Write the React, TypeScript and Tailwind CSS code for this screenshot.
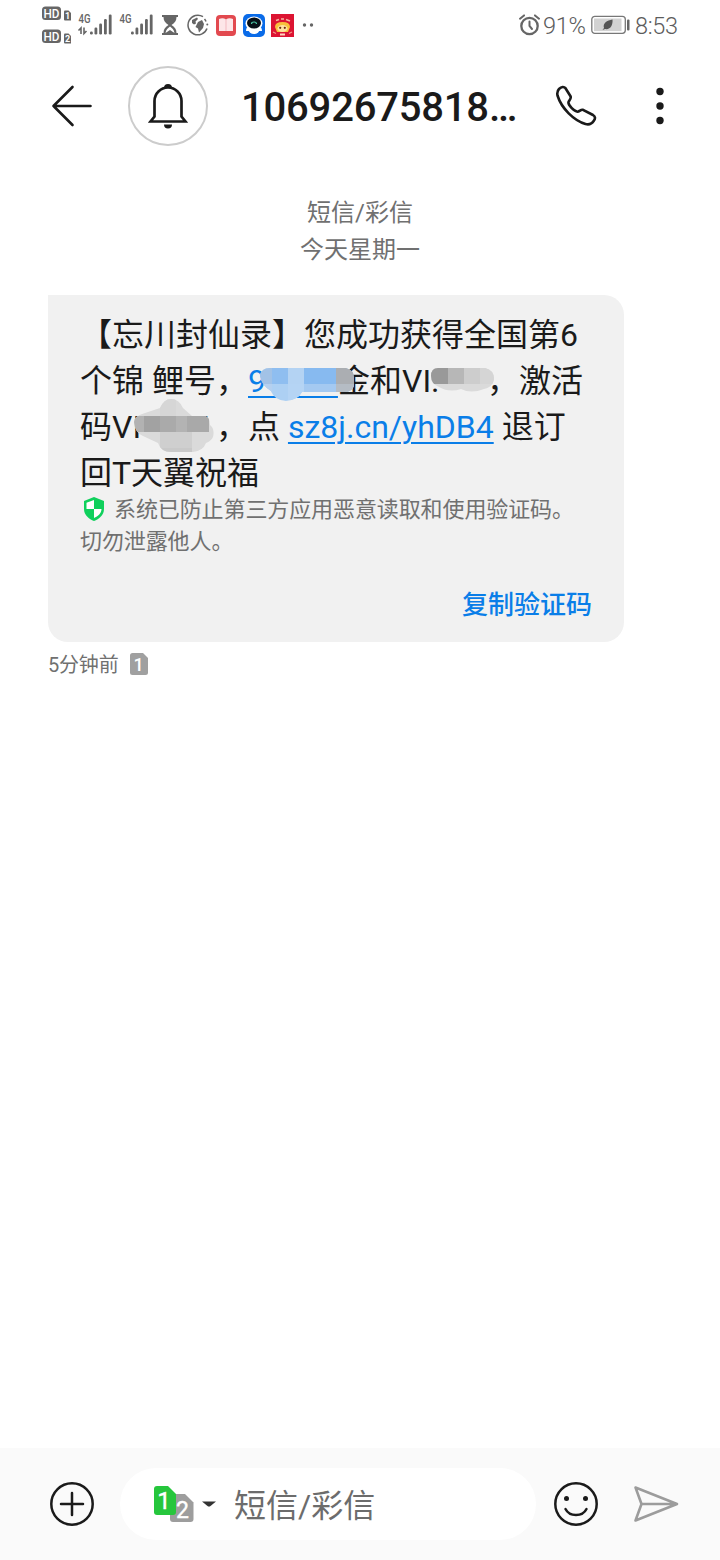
import React, { FC } from "react";

const INK = "#1a1a1a";
const STATUS = "#666666";

interface Tile {
  x: number;
  y: number;
  w: number;
  h: number;
  fill: string;
}

interface MosaicProps {
  id: string;
  className: string;
  width: number;
  height: number;
  shape: string;
  base: string;
  tiles: Tile[];
}

// Pixelated smudge that covers private parts of the message
const Mosaic: FC<MosaicProps> = ({ id, className, width, height, shape, base, tiles }) => (
  <svg className={className} width={width} height={height} viewBox={`0 0 ${width} ${height}`}>
    <clipPath id={id}>
      <path d={shape} />
    </clipPath>
    <g clipPath={`url(#${id})`}>
      <rect width={width} height={height} fill={base} />
      {tiles.map((t, i) => (
        <rect key={i} x={t.x} y={t.y} width={t.w} height={t.h} fill={t.fill} />
      ))}
    </g>
  </svg>
);

const amountTiles: Tile[] = [
  { x: 0, y: 2, w: 12, h: 16, fill: "#a2c2e6" },
  { x: 12, y: 2, w: 16, h: 16, fill: "#8fbef0" },
  { x: 28, y: 2, w: 16, h: 16, fill: "#b4d3f3" },
  { x: 44, y: 2, w: 32, h: 16, fill: "#87baf0" },
  { x: 76, y: 2, w: 18, h: 16, fill: "#abaeb2" },
  { x: 0, y: 18, w: 12, h: 16, fill: "#b5d0ef" },
  { x: 28, y: 18, w: 16, h: 16, fill: "#b5d4f4" },
  { x: 44, y: 18, w: 32, h: 16, fill: "#a4c9f1" },
  { x: 76, y: 18, w: 18, h: 16, fill: "#b5bcc4" },
];

const vipTiles: Tile[] = [
  { x: 0, y: 4, w: 17, h: 16, fill: "#999999" },
  { x: 17, y: 4, w: 16, h: 16, fill: "#b7b7b7" },
  { x: 33, y: 4, w: 16, h: 16, fill: "#cdcdcd" },
  { x: 49, y: 4, w: 14, h: 16, fill: "#d5d5d5" },
];

const codeTiles: Tile[] = [
  { x: 27, y: 0, w: 16, h: 17, fill: "#d6d6d6" },
  { x: 0, y: 17, w: 11, h: 16, fill: "#b2b2b2" },
  { x: 11, y: 17, w: 16, h: 16, fill: "#a2a2a2" },
  { x: 27, y: 17, w: 16, h: 16, fill: "#aaaaaa" },
  { x: 43, y: 17, w: 11, h: 16, fill: "#b3b3b3" },
  { x: 54, y: 17, w: 22, h: 16, fill: "#a9a9a9" },
  { x: 27, y: 33, w: 32, h: 16, fill: "#cfcfcf" },
  { x: 27, y: 49, w: 32, h: 4, fill: "#c9c9c9" },
];

const HdBadges = () => (
  <svg width="30" height="38" viewBox="0 0 30 38">
    {[1, 2].map((n, i) => (
      <g key={n} transform={`translate(0 ${i * 23})`}>
        <rect x="0" y="0.5" width="19" height="13.5" rx="3.5" fill={STATUS} />
        <text x="9.5" y="11.7" textAnchor="middle" fontSize="12.5" fontWeight="500" fill="#fff" textLength="16" lengthAdjust="spacingAndGlyphs">HD</text>
        <path d="M23 4.500h3.500l2.500 2.500V14.500H23q-1 0-1-1V5.500q0-1 1-1z" fill={STATUS} />
        <text x="25.5" y="13" textAnchor="middle" fontSize="9" fontWeight="700" fill="#fff">{n}</text>
      </g>
    ))}
  </svg>
);

const Signal: FC<{ arrows?: boolean }> = ({ arrows }) => (
  <svg className="overflow-visible" width="35" height="32" viewBox="0 -4 35 32">
    <text x="0.5" y="10" fontSize="13" fontWeight="500" fill={STATUS} textLength="12" lengthAdjust="spacingAndGlyphs">4G</text>
    {arrows && (
      <path d="M3 21v-6l-2.500 2.500M6 14.500v6l2.500-2.500" fill="none" stroke={STATUS} strokeWidth="1.600" />
    )}
    <g fill={STATUS}>
      <rect x="12" y="18.500" width="2.800" height="3" rx="1.200" />
      <rect x="16.500" y="14.500" width="2.800" height="7" rx="1.200" />
      <rect x="21.200" y="10.500" width="2.800" height="11" rx="1.200" />
      <rect x="26" y="6" width="2.800" height="15.500" rx="1.200" />
      <rect x="30.800" y="1.500" width="2.800" height="20" rx="1.200" />
    </g>
  </svg>
);

const StatusBar = () => (
  <div className="flex h-[50px] items-center pl-[42px] pr-[41px] text-[#5c5c5c]">
    <HdBadges />
    <div className="ml-1.5 flex gap-[6px]">
      <Signal arrows />
      <Signal />
    </div>
    <svg className="ml-[8px]" width="16" height="22" viewBox="0 0 16 22">
      <path d="M0 1h16v2h-1.500c0 4-2 6-5 8 3 2 5 4 5 8H16v2H0v-2h1.500c0-4 2-6 5-8-3-2-5-4-5-8H0z" fill={STATUS} />
      <path d="M3.500 19c.5-3.500 2.500-5 4.500-6.500 2 1.500 4 3 4.500 6.500l-4.500-3z" fill="#fff" />
    </svg>
    <svg className="ml-[9px]" width="22" height="22" viewBox="0 0 22 22">
      <path d="M16 2.700A9.800 9.800 0 1 0 20 14.500M17.500 5a9 9 0 0 1 1.500 2.500" fill="none" stroke={STATUS} strokeWidth="1.500" />
      <path d="M5 6l5-2.500 1 1.500-2.500 2.500 .5 2-2 1-2-1.500zM11 8l4-2 2 4-1 4-4 4.500-1-4-2.500-1.500z" fill={STATUS} />
      <circle cx="20.300" cy="10.500" r="1" fill={STATUS} />
    </svg>
    <svg className="ml-[7px]" width="20" height="21" viewBox="0 0 20 21">
      <rect width="20" height="21" rx="4" fill="#e2494f" />
      <path d="M3 4q4-1.500 7 .5 3-2 7-.5v12H3z" fill="#fde6e8" />
      <path d="M10 4.500V16" stroke="#f3b9c0" strokeWidth="1" />
    </svg>
    <svg className="ml-[7px]" width="22" height="23" viewBox="0 0 22 23">
      <rect width="22" height="23" rx="5" fill="#0a6be8" />
      <ellipse cx="11" cy="15.500" rx="5.500" ry="4.500" fill="#fff" />
      <path d="M3 17q0-4 3-5l1 5zM19 17q0-4-3-5l-1 5z" fill="#fff" />
      <ellipse cx="11" cy="9.500" rx="8.500" ry="7" fill="#fff" />
      <ellipse cx="11" cy="9" rx="7" ry="5.600" fill="#081018" />
      <path d="M8.500 10q0-2 2.500-2t2.500 2" fill="none" stroke="#4cc6a6" strokeWidth="1.200" />
    </svg>
    <svg className="ml-[6px]" width="23" height="23" viewBox="0 0 23 23">
      <rect width="23" height="23" fill="#dc1432" />
      <path d="M5 6.500l3-1M10 5h3M15 5.500l4 1.500" stroke="#f7b5a0" strokeWidth="1.600" />
      <path d="M4 13q0-5 7.500-5t7.500 5l-2 5H6z" fill="#f8c13c" />
      <ellipse cx="11.500" cy="14.500" rx="5" ry="3.500" fill="#ffe3a0" />
      <circle cx="9.200" cy="13.800" r="1.100" fill="#6b2a12" />
      <circle cx="13.800" cy="13.800" r="1.100" fill="#6b2a12" />
      <path d="M9 20.500h5" stroke="#ffd7c0" strokeWidth="2" />
      <path d="M2 18l3 1.500M21 18l-3 1.500" stroke="#f49a8a" strokeWidth="1.200" />
    </svg>
    <svg className="ml-[8px]" width="13" height="6" viewBox="0 0 13 6">
      <circle cx="2.500" cy="3" r="1.700" fill={STATUS} />
      <circle cx="9.500" cy="3" r="1.700" fill={STATUS} />
    </svg>
    <div className="ml-auto flex items-center">
      <svg width="22" height="22" viewBox="0 0 22 22" fill="none" stroke={STATUS} strokeLinecap="round">
        <circle cx="10.500" cy="12" r="8.200" strokeWidth="2.300" />
        <path d="M10.500 7.500v4.500l2.500 3" strokeWidth="2" />
        <path d="M1 4.700l4-3.300M20 4.700l-4-3.300" strokeWidth="2" />
      </svg>
      <span className="ml-[2px] w-[48px] pt-px text-[23.5px] font-light leading-[28px] tracking-[-0.3px]">91%</span>
      <svg width="39" height="20" viewBox="0 0 39 20">
        <rect x="0.800" y="1.300" width="33.500" height="17" rx="3" fill="#fff" stroke="#777" strokeWidth="1.300" />
        <rect x="3" y="3.500" width="27.500" height="12.600" fill="#d2d2d2" />
        <path d="M11.500 15l1.500-2c-1.500-5 3-7.500 8.500-8.500 .5 5.500-2 10.500-7.500 9.500z" fill="#555" />
        <rect x="36" y="4.500" width="2.500" height="11" rx="1" fill={STATUS} />
      </svg>
      <span className="ml-[5px] w-[44px] whitespace-nowrap pt-px text-[23.5px] font-light leading-[28px] tracking-[-0.3px]">8:53</span>
    </div>
  </div>
);

const Header = () => (
  <header className="flex h-[112px] items-center pl-[51px]">
    <svg width="42" height="42" viewBox="0 0 42 42" fill="none" stroke={INK} strokeWidth="2.600" strokeLinecap="round" strokeLinejoin="round">
      <path d="M21.500 2L2.500 21l19 19M2.500 21h37" />
    </svg>
    <div className="ml-[35px] flex h-20 w-20 items-center justify-center rounded-full border-2 border-[#cccccc]">
      <svg width="40" height="46" viewBox="0 0 40 46">
        <path d="M6.500 33.500V18a13.500 13.500 0 0 1 27 0v15.500l4 5H2.500z" fill="none" stroke={INK} strokeWidth="2.700" />
        <path d="M16 5a4 4 0 0 1 8 0zM16 41.500h8a4 4 0 0 1-8 0z" fill={INK} />
      </svg>
    </div>
    <h1 className="ml-[33px] w-[282px] whitespace-nowrap pt-[4px] text-[40px] font-medium leading-[48px] tracking-[-0.2px] text-[#1a1a1a]">
      10692675818…
    </h1>
    <svg className="ml-[32px]" width="42" height="42" viewBox="0 0 42 42" fill="none" stroke={INK} strokeWidth="2.600" strokeLinejoin="round">
      <path d="M4 4c2.500-2.500 5-2.600 6.500-.8l5 8c1.200 2.300-1.500 4-2 5.800-.7 3 5.800 9.500 9 9.700 2.200 0 3.300-2.700 5.500-1.900l10 5.200c2.300 1.400 2.500 3.500 1 5.500-2.200 3.500-5 4.500-8.500 3.500C19 35.500 6.500 23.500 2.500 10.500 2 8 2.300 5.800 4 4z" />
    </svg>
    <svg className="ml-[57px]" width="12" height="42" viewBox="0 0 12 42" fill={INK}>
      <circle cx="6" cy="6.500" r="3.700" />
      <circle cx="6" cy="21" r="3.700" />
      <circle cx="6" cy="35.500" r="3.700" />
    </svg>
  </header>
);

const Message = () => (
  <section className="ml-12 mt-[26px] h-[347px] w-[576px] rounded-[20px] rounded-tl-none bg-[#f1f1f1] px-8 pt-[17px]">
    <div className="relative whitespace-nowrap text-[32px] leading-[46px] text-[#1a1a1a]">
      <p>【忘川封仙录】您成功获得全国第6</p>
      <p className="flex">
        <span className="w-[168px]">个锦 鲤号，</span>
        <span className="w-[90px] text-[#0a7ee8] underline decoration-2 underline-offset-4">9<span className="text-transparent">0000</span></span>
        <span className="w-[149px]">金和VI.</span>
        <span>，激活</span>
      </p>
      <p className="flex">
        <span className="w-[98px]">码VI</span>
        <span className="w-[38px] pr-1 text-right">6</span>
        <span>，点&nbsp;</span>
        <span className="text-[#0a7ee8] underline decoration-2 underline-offset-4">sz8j.cn/yhDB4</span>
        <span>&nbsp;退订</span>
      </p>
      <p>回T天翼祝福</p>

      <Mosaic
        id="amount"
        className="absolute left-[180px] top-[54px]"
        width={94}
        height={38}
        shape="M0 10Q1 2 10 2H86Q94 4 94 12V20Q92 26 84 26H42Q38 34 26 35 14 34 11 25 2 20 0 10z"
        base="#add0f3"
        tiles={amountTiles}
      />
      <Mosaic
        id="vip"
        className="absolute left-[351px] top-[52px]"
        width={64}
        height={30}
        shape="M0 12Q0 4 7 4H54Q63 6 63 15 62 23 53 25 40 30 30 25 18 29 8 23 0 20 0 12z"
        base="#dadada"
        tiles={vipTiles}
      />
      <Mosaic
        id="code"
        className="absolute left-[53px] top-[87px]"
        width={82}
        height={54}
        shape="M1 23Q1 17 12 14L27 9Q31 0 38 0 46 0 50 9L59 17H72Q77 18 77 26 82 30 80 38 78 42 73 44 70 52 60 53H38Q28 53 25 44L10 37Q2 34 1 23z"
        base="#dadada"
        tiles={codeTiles}
      />
    </div>
    <div className="whitespace-nowrap text-[22px] leading-8 tracking-[-0.1px] text-[#707070]">
      <p className="-mt-[2px] flex items-center">
        <svg className="mb-[3px] ml-[3px] mr-[9px]" width="22" height="26" viewBox="0 0 22 26">
          <path d="M11 1l10 4v8c0 6-5 10-10 12C6 23 1 19 1 13V5z" fill="#0fd05c" />
          <path d="M11 4v9H3.500V6.800zM11 13h7.500c0 4-3.500 7.500-7.500 9z" fill="#fff" />
        </svg>
        系统已防止第三方应用恶意读取和使用验证码。
      </p>
      <p>切勿泄露他人。</p>
    </div>
    <button className="ml-auto mt-[28px] block text-[26px] font-medium leading-[38px] text-[#0a7ee8]">
      复制验证码
    </button>
  </section>
);

const Composer = () => (
  <footer className="mt-auto flex h-28 items-center bg-[#fafafa] pl-[50px]">
    <svg width="44" height="44" viewBox="0 0 44 44" fill="none" stroke={INK} strokeWidth="2.500" strokeLinecap="round">
      <circle cx="22" cy="22" r="20.700" />
      <path d="M11 22h22M22 11v22" />
    </svg>
    <div className="ml-[26px] flex h-[72px] w-[416px] items-center rounded-full bg-white pl-[33px]">
      <svg width="42" height="38" viewBox="0 0 42 38">
        <path d="M20 9h12l8.500 8.500V34q0 3-3 3H20q-3 0-3-3V9z" fill="#9d9d9d" />
        <path d="M4 1h11l8 8v18q0 3-3 3H4q-3 0-3-3V4q0-3 3-3z" fill="#26c63c" />
        <text x="11" y="24" textAnchor="middle" fontSize="24" fill="#fff" stroke="#fff" strokeWidth="0.400">1</text>
        <text x="29.500" y="33" textAnchor="middle" fontSize="23" fill="#fff" stroke="#fff" strokeWidth="0.400">2</text>
      </svg>
      <svg className="ml-[7px]" width="14" height="6" viewBox="0 0 14 6">
        <path d="M0 0.500h14L8.500 5q-1.500 1-3 0z" fill="#333" />
      </svg>
      <span className="ml-[18px] pt-[4px] text-[32px] leading-[46px] text-[#6c6c6c]">短信/彩信</span>
    </div>
    <svg className="ml-[18px]" width="44" height="44" viewBox="0 0 44 44" fill="none" stroke={INK} strokeWidth="2.500" strokeLinecap="round">
      <circle cx="22" cy="22" r="20.700" />
      <path d="M11.500 27c4 8 17 8 21 0" />
      <circle cx="12.500" cy="16.500" r="2.500" fill={INK} stroke="none" />
      <circle cx="31.500" cy="16.500" r="2.500" fill={INK} stroke="none" />
    </svg>
    <svg className="ml-[35px]" width="46" height="38" viewBox="0 0 46 38" fill="none" stroke="#9c9c9c" strokeWidth="2.600" strokeLinejoin="round">
      <path d="M2.500 2.500L44 19 2.500 35.500 8.500 19zM8.500 19H44" />
    </svg>
  </footer>
);

const App: FC = () => (
  <div className="flex h-[1560px] w-[720px] flex-col overflow-hidden bg-white font-[Roboto,'Noto_Sans_CJK_SC',sans-serif]">
    <StatusBar />
    <Header />
    <div className="mt-[33px] text-center text-[24px] leading-[37px] text-[#707070]">
      <p>短信/彩信</p>
      <p>今天星期一</p>
    </div>
    <Message />
    <div className="ml-12 mt-[7px] flex h-8 items-center text-[20px] tracking-[-0.2px] text-[#707070]">
      <span>5分钟前</span>
      <svg className="mb-[2px] ml-[12px]" width="18" height="22" viewBox="0 0 18 22">
        <path d="M2.500 0H13l5 5v14.500q0 2.500-2.500 2.500h-13Q0 22 0 19.500v-17Q0 0 2.500 0z" fill="#a0a0a0" />
        <text x="8.500" y="17.500" textAnchor="middle" fontSize="18" fontWeight="500" fill="#fff">1</text>
      </svg>
    </div>
    <Composer />
  </div>
);

export default App;
